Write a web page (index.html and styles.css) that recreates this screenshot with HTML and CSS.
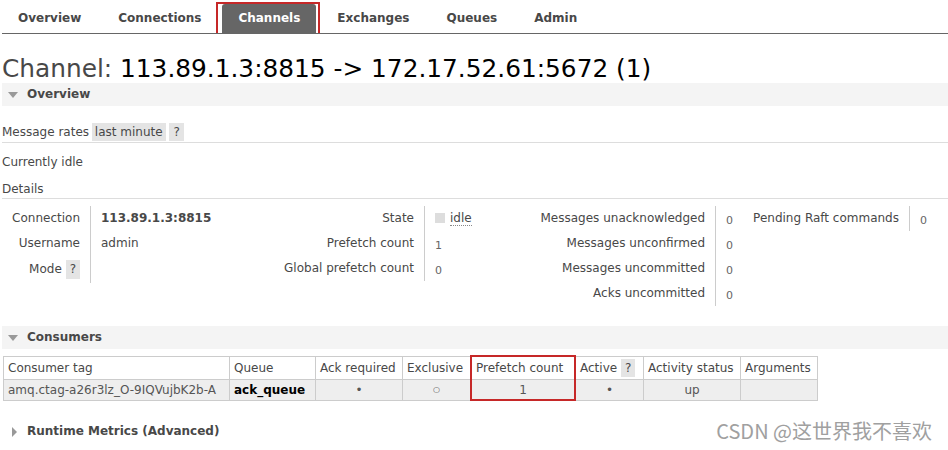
FILE: index.html
```html
<!DOCTYPE html>
<html lang="en">
<head>
    <meta charset="UTF-8">
    <title>RabbitMQ Management - Channel</title>
    <link rel="stylesheet" href="styles.css">
</head>
<body>
    <ul class="nav">
        <li><a href="#">Overview</a></li>
        <li><a href="#">Connections</a></li>
        <li class="marked"><a href="#" class="current">Channels</a></li>
        <li><a href="#">Exchanges</a></li>
        <li><a href="#">Queues</a></li>
        <li><a href="#">Admin</a></li>
    </ul>

    <h1><span class="dim">Channel:</span> 113.89.1.3:8815 -&gt; 172.17.52.61:5672 (1)</h1>

    <div class="section">
        <h2 class="section-head"><span class="tri-down"></span>Overview</h2>
        <div class="rates">
            Message rates <span class="pill">last minute</span> <span class="help">?</span>
        </div>
        <p class="idle">Currently idle</p>
        <h3 class="sub">Details</h3>

        <div class="details">
            <table class="facts f1">
                <tr><th>Connection</th><td><b>113.89.1.3:8815</b></td></tr>
                <tr><th>Username</th><td>admin</td></tr>
                <tr><th>Mode <span class="help">?</span></th><td></td></tr>
            </table>
            <table class="facts f2">
                <tr><th>State</th><td><span class="state-box"></span><abbr>idle</abbr></td></tr>
                <tr><th>Prefetch count</th><td class="num">1</td></tr>
                <tr><th>Global prefetch count</th><td class="num">0</td></tr>
            </table>
            <table class="facts f3">
                <tr><th>Messages unacknowledged</th><td class="num">0</td></tr>
                <tr><th>Messages unconfirmed</th><td class="num">0</td></tr>
                <tr><th>Messages uncommitted</th><td class="num">0</td></tr>
                <tr><th>Acks uncommitted</th><td class="num">0</td></tr>
            </table>
            <table class="facts f4">
                <tr><th>Pending Raft commands</th><td class="num">0</td></tr>
            </table>
        </div>
    </div>

    <div class="section">
        <h2 class="section-head consumers"><span class="tri-down"></span>Consumers</h2>
        <table class="list">
            <tr>
                <th class="c-tag">Consumer tag</th>
                <th class="c-queue">Queue</th>
                <th class="c-ack">Ack required</th>
                <th class="c-excl">Exclusive</th>
                <th class="c-pref marked-col">Prefetch count</th>
                <th class="c-act">Active <span class="help">?</span></th>
                <th class="c-status">Activity status</th>
                <th class="c-args">Arguments</th>
            </tr>
            <tr class="row">
                <td class="left">amq.ctag-a26r3lz_O-9IQVujbK2b-A</td>
                <td class="left"><b>ack_queue</b></td>
                <td>&#8226;</td>
                <td class="hollow">&#9675;</td>
                <td class="marked-col">1</td>
                <td>&#8226;</td>
                <td>up</td>
                <td></td>
            </tr>
        </table>
    </div>

    <div class="section">
        <h2 class="section-head closed"><span class="tri-right"></span>Runtime Metrics (Advanced)</h2>
    </div>

    <div class="watermark">CSDN @这世界我不喜欢</div>
</body>
</html>
```

FILE: styles.css
```css
body {
    margin: 0;
    font-family: "DejaVu Sans", Verdana, sans-serif;
    font-size: 12px;
    color: #484848;
    background: #fff;
}

/* top menu */
.nav {
    display: flex;
    align-items: flex-end;
    list-style: none;
    margin: 0 0 0 2px;
    padding: 0;
    height: 33px;
    border-bottom: 1px solid #666;
}

.nav li {
    margin-right: 5px;
}

.nav a {
    display: block;
    padding: 0 16px;
    height: 28px;
    line-height: 27px;
    font-weight: bold;
    color: #484848;
    text-decoration: none;
}

/* red highlight box drawn round the current tab */
.nav li.marked {
    border: 2px solid #c62828;
    border-bottom: none;
    padding: 0 2px 0 4px;
    margin-left: -6px;
    margin-right: 1px;
}

.nav a.current {
    background: #666;
    color: #fff;
    border-radius: 3px 3px 0 0;
    height: 29px;
    line-height: 28px;
}

h1 {
    margin: 20px 0 0 2px;
    font-size: 24.8px;
    font-weight: normal;
    line-height: 29px;
    color: #000;
}

h1 .dim {
    color: #484848;
}

/* collapsible sections */
.section-head {
    margin: 0 0 0 2px;
    height: 23px;
    line-height: 23px;
    background: #f4f4f4;
    font-size: 12px;
    font-weight: bold;
    color: #484848;
    display: flex;
    align-items: center;
}

.section-head.consumers {
    margin-top: 20px;
}

.section-head.closed {
    margin-top: 19px;
    background: #fff;
}

.tri-down {
    width: 0;
    height: 0;
    border-left: 5px solid transparent;
    border-right: 5px solid transparent;
    border-top: 6px solid #999;
    margin: 1px 9px 0 6px;
}

.tri-right {
    width: 0;
    height: 0;
    border-top: 5px solid transparent;
    border-bottom: 5px solid transparent;
    border-left: 5px solid #999;
    margin: 0 10px 0 10px;
}

.rates {
    margin: 17px 0 0 2px;
    height: 18px;
    line-height: 18px;
    border-bottom: 1px solid #ddd;
    padding-bottom: 1px;
}

.pill {
    display: inline-block;
    background: #e4e4e4;
    padding: 0 3px;
    margin-left: -1px;
}

.help {
    display: inline-block;
    background: #e4e4e4;
    padding: 0 4px;
    font-weight: normal;
    line-height: 18px;
}

.idle {
    margin: 11px 0 0 2px;
    line-height: 17px;
}

.sub {
    margin: 10px 0 0 2px;
    font-size: 12px;
    font-weight: normal;
    line-height: 17px;
    border-bottom: 1px solid #ddd;
}

/* facts tables */
.details {
    display: flex;
    margin: 7px 0 0 2px;
    align-items: flex-start;
}

.facts {
    border-collapse: collapse;
}

.facts th {
    text-align: right;
    font-weight: normal;
    padding: 4px 10px 4px 0;
    line-height: 17px;
    white-space: nowrap;
    vertical-align: top;
}

.facts td {
    border-left: 1px solid #ccc;
    padding: 4px 0 4px 10px;
    line-height: 17px;
    vertical-align: top;
    white-space: nowrap;
}

.facts td.num {
    font-size: 11px;
    color: #666;
    padding-top: 6px;
    padding-bottom: 2px;
}

.f1 th { width: 78px; }
.f1 td { width: 149px; }
.f2 th { width: 164px; }
.f2 td { width: 76px; }
.f3 th { width: 194px; }
.f3 td { width: 27px; }
.f4 th { width: 146px; }
.f4 td { width: 20px; }

.facts .help {
    line-height: 19px;
}

.state-box {
    display: inline-block;
    width: 10px;
    height: 10px;
    background: #ddd;
    margin-right: 5px;
    vertical-align: -1px;
}

abbr {
    text-decoration: none;
    border-bottom: 1px dotted #888;
}

/* consumers table */
.list {
    border-collapse: collapse;
    margin: 6px 0 0 3px;
}

.list th,
.list td {
    border: 1px solid #ccc;
    padding: 0 4px;
    white-space: nowrap;
}

.list th {
    height: 22px;
    font-weight: normal;
    text-align: left;
    background: #fff;
}

.list td {
    height: 19px;
    text-align: center;
    background: #eee;
    color: #555;
}

.list td.left {
    text-align: left;
}

.list td b {
    color: #000;
}

.list td.hollow {
    font-size: 8px;
}

.list .help {
    line-height: 18px;
    padding: 0 4px;
}

.c-tag { width: 217px; }
.c-queue { width: 77px; }
.c-ack { width: 78px; }
.c-excl { width: 59px; }
.c-pref { width: 94px; }
.c-act { width: 59px; }
.c-status { width: 88px; }
.c-args { width: 68px; }

.list th.marked-col {
    border: 2px solid #c62828;
    border-bottom-color: #ccc;
    border-bottom-width: 1px;
}

.list td.marked-col {
    border: 2px solid #c62828;
    border-top: 1px solid #ccc;
}

.watermark {
    position: absolute;
    right: 16px;
    top: 416px;
    font-family: "Noto Sans CJK SC", sans-serif;
    font-size: 20px;
    color: #a0a0a0;
}
```
